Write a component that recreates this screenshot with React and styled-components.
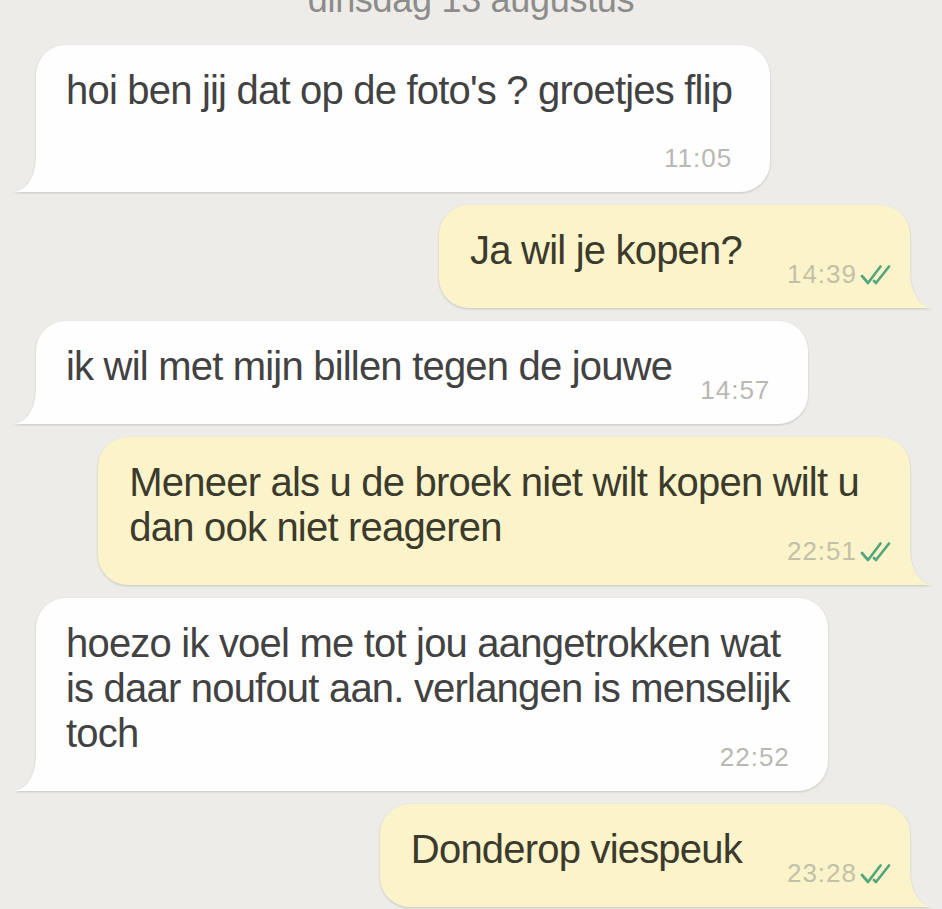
import React from "react";
import styled, { createGlobalStyle, css } from "styled-components";

const GlobalStyle = createGlobalStyle`
  html, body {
    margin: 0;
    padding: 0;
    background: #edece8;
    overflow: hidden;
  }
  body {
    font-family: "Liberation Sans", Arial, Helvetica, sans-serif;
  }
`;

const Chat = styled.div`
  width: 942px;
  height: 909px;
  overflow: hidden;
  background: #edece8;
  display: flex;
  flex-direction: column;
  gap: 13px;
`;

const DateLabel = styled.div`
  align-self: center;
  margin-top: -20px;
  margin-bottom: 12px;
  font-size: 36px;
  line-height: 40px;
  color: #8c8c8a;
  letter-spacing: -0.3px;
`;

const Bubble = styled.div`
  position: relative;
  align-self: ${(p) => (p.$out ? "flex-end" : "flex-start")};
  margin: ${(p) => (p.$out ? "0 32px 0 0" : "0 0 0 36px")};
  padding: ${(p) => (p.$out ? "23px 16px 20px 31px" : "23px 38px 20px 30px")};
  background: ${(p) => (p.$out ? "#fbf4ca" : "#fefefe")};
  color: ${(p) => (p.$out ? "#3b3a2c" : "#424242")};
  border-radius: ${(p) => (p.$out ? "30px 30px 0 30px" : "30px 30px 30px 0")};
  filter: drop-shadow(0 1.5px 1px rgba(0, 0, 0, 0.17));
  display: flex;
  flex-direction: column;

  &::before {
    content: "";
    position: absolute;
    bottom: 0;
    width: 22px;
    height: 34px;
    background: inherit;
    ${(p) =>
      p.$out
        ? css`
            right: -22px;
            -webkit-mask: radial-gradient(ellipse 22px 34px at 100% 0, transparent 97%, #000 100%);
            mask: radial-gradient(ellipse 22px 34px at 100% 0, transparent 97%, #000 100%);
          `
        : css`
            left: -22px;
            -webkit-mask: radial-gradient(ellipse 22px 34px at 0 0, transparent 97%, #000 100%);
            mask: radial-gradient(ellipse 22px 34px at 0 0, transparent 97%, #000 100%);
          `}
  }
`;

const Line = styled.div`
  font-size: 40px;
  line-height: 45px;
  letter-spacing: -0.8px;
  white-space: nowrap;
  padding-right: ${(p) => (p.$out ? 35 : 0)}px;
`;

const LastRow = styled.div`
  display: flex;
  align-items: flex-end;
  justify-content: space-between;
  gap: ${(p) => (p.$out ? 45 : 28)}px;
`;

const LastLine = styled(Line)`
  padding-right: 0;
  padding-bottom: 15px;
`;

const Meta = styled.div`
  align-self: flex-end;
  display: flex;
  align-items: center;
  gap: 3px;
  margin-top: ${(p) => (p.$below ? 32 : 0)}px;
  font-size: 26px;
  line-height: 27px;
  letter-spacing: 1px;
  color: ${(p) => (p.$out ? "#c4c0a8" : "#b9b8b3")};
  white-space: nowrap;
`;

const Ticks = styled.svg`
  width: 34px;
  height: 20px;
`;

const DoubleCheck = () => (
  <Ticks viewBox="0 0 34 20" fill="none">
    <path
      d="M2 11 L8 18 L20.5 1.5 M14 16 L16 18 L29 1.5"
      stroke="#55a67e"
      strokeWidth="2.7"
      strokeLinecap="round"
      strokeLinejoin="round"
    />
  </Ticks>
);

const messages = [
  { out: false, lines: ["hoi ben jij dat op de foto's ? groetjes flip"], time: "11:05", below: true },
  { out: true, lines: ["Ja wil je kopen?"], time: "14:39" },
  { out: false, lines: ["ik wil met mijn billen tegen de jouwe"], time: "14:57" },
  {
    out: true,
    lines: ["Meneer als u de broek niet wilt kopen wilt u", "dan ook niet reageren"],
    time: "22:51",
  },
  {
    out: false,
    lines: [
      "hoezo ik voel me tot jou aangetrokken wat",
      "is daar noufout aan. verlangen is menselijk",
      "toch",
    ],
    time: "22:52",
  },
  { out: true, lines: ["Donderop viespeuk"], time: "23:28" },
];

const Message = ({ out, lines, time, below }) => {
  const meta = (
    <Meta $out={out} $below={below}>
      <span>{time}</span>
      {out && <DoubleCheck />}
    </Meta>
  );
  const head = lines.slice(0, -1);
  const last = lines[lines.length - 1];
  return (
    <Bubble $out={out}>
      {head.map((l, i) => (
        <Line key={i} $out={out}>
          {l}
        </Line>
      ))}
      {below ? (
        <>
          <Line>{last}</Line>
          {meta}
        </>
      ) : (
        <LastRow $out={out}>
          <LastLine>{last}</LastLine>
          {meta}
        </LastRow>
      )}
    </Bubble>
  );
};

const App = () => {
  return (
    <>
      <GlobalStyle />
      <Chat>
        <DateLabel>dinsdag 13 augustus</DateLabel>
        {messages.map((m, i) => (
          <Message key={i} {...m} />
        ))}
      </Chat>
    </>
  );
};

export default App;
